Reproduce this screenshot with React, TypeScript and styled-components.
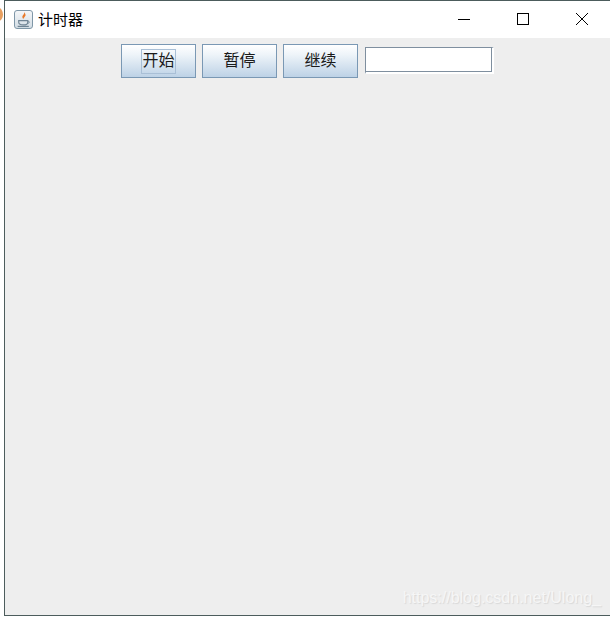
import styled, { createGlobalStyle } from "styled-components";

const GlobalStyle = createGlobalStyle`
  html,
  body {
    margin: 0;
    padding: 0;
    background: #ffffff;
  }
`;

export default function App() {
  return (
    <Screen>
      <GlobalStyle />
      <Desktop>
        <DesktopBlob />
      </Desktop>
      <Window>
        <TitleBar>
          <AppIcon>
            <svg width="15" height="17" viewBox="0 0 14 16">
              <path d="M7.500 1c1 2-2 3-1.500 5 .2.8.6 1.200 1 1.600C6.800 6 9.600 5 8.800 3 9 4 8.600 2 7.500 1z" fill="#e8792a" />
              <path d="M2.500 9h8.500v1.500c0 1.800-1.600 2.600-4.200 2.600S2.500 12.300 2.500 10.500z" fill="none" stroke="#6f8494" strokeWidth="1.100" />
              <path d="M11 9.500c2 0 2 2-.5 2.400" fill="none" stroke="#6f8494" strokeWidth="0.900" />
              <path d="M1.500 14.500h10.500" stroke="#6f8494" strokeWidth="1.200" />
            </svg>
          </AppIcon>
          <Title>计时器</Title>
          <WindowControls>
            <ControlSlot>
              <svg width="12" height="12" viewBox="0 0 12 12">
                <path d="M0 6.500h12" stroke="#000" strokeWidth="1" />
              </svg>
            </ControlSlot>
            <ControlSlot>
              <svg width="12" height="12" viewBox="0 0 12 12">
                <rect x="0.500" y="0.500" width="11" height="11" fill="none" stroke="#000" strokeWidth="1" />
              </svg>
            </ControlSlot>
            <ControlSlot>
              <svg width="12" height="12" viewBox="0 0 12 12">
                <path d="M0 0l12 12M12 0L0 12" stroke="#000" strokeWidth="1" />
              </svg>
            </ControlSlot>
          </WindowControls>
        </TitleBar>
        <Content>
          <Toolbar>
            <Button type="button">
              <ButtonLabel $focused>开始</ButtonLabel>
            </Button>
            <Button type="button">
              <ButtonLabel>暂停</ButtonLabel>
            </Button>
            <Button type="button">
              <ButtonLabel>继续</ButtonLabel>
            </Button>
            <TimeField type="text" readOnly />
          </Toolbar>
          <Watermark>https://blog.csdn.net/Ulong_</Watermark>
        </Content>
      </Window>
    </Screen>
  );
}

const Screen = styled.div`
  width: 610px;
  height: 617px;
  display: flex;
  overflow: hidden;
  background: #ffffff;
`;

const Desktop = styled.div`
  position: relative;
  width: 4px;
  flex: none;
  overflow: hidden;
`;

const DesktopBlob = styled.div`
  position: absolute;
  left: -6px;
  top: 8px;
  width: 9px;
  height: 13px;
  border-radius: 50%;
  background: #e8a060;
`;

const Window = styled.div`
  flex: 1;
  height: 616px;
  box-sizing: border-box;
  border-left: 1px solid #4c5c5c;
  border-top: 1px solid #4c5c5c;
  border-bottom: 1px solid #4c5c5c;
  display: flex;
  flex-direction: column;
`;

const TitleBar = styled.div`
  height: 37px;
  flex: none;
  box-sizing: border-box;
  display: flex;
  align-items: center;
  padding: 0 0 1px 9px;
  background: #ffffff;
`;

const AppIcon = styled.div`
  width: 19px;
  height: 19px;
  box-sizing: border-box;
  border: 1px solid #7f97a8;
  border-radius: 3px;
  background: linear-gradient(#f4f6f8, #d3dde5);
  display: flex;
  align-items: center;
  justify-content: center;
`;

const Title = styled.span`
  margin-left: 5px;
  font-family: "Noto Sans CJK SC", sans-serif;
  font-size: 15px;
  line-height: 20px;
  color: #000000;
`;

const WindowControls = styled.div`
  margin-left: auto;
  display: flex;
  margin-right: -1px;
`;

const ControlSlot = styled.div`
  width: 59px;
  height: 36px;
  display: flex;
  align-items: center;
  justify-content: center;
`;

const Content = styled.div`
  position: relative;
  flex: 1;
  background: #eeeeee;
`;

const Toolbar = styled.div`
  display: flex;
  justify-content: center;
  align-items: flex-start;
  padding-top: 6px;
  gap: 6px;
`;

const Button = styled.button`
  width: 75px;
  height: 34px;
  padding: 0;
  box-sizing: border-box;
  border: 1px solid #7a98b4;
  background: linear-gradient(#ffffff 0%, #eef4f9 30%, #bdd2e6 100%);
  display: flex;
  align-items: center;
  justify-content: center;
`;

const ButtonLabel = styled.span<{ $focused?: boolean }>`
  box-sizing: border-box;
  width: 35px;
  height: 25px;
  padding-bottom: 4px;
  display: flex;
  align-items: center;
  justify-content: center;
  white-space: nowrap;
  font-family: "Noto Sans CJK SC", sans-serif;
  font-size: 16px;
  line-height: 20px;
  color: #1a1a1a;
  border: 1px solid ${(p) => (p.$focused ? "#a9bfd6" : "transparent")};
`;

const TimeField = styled.input`
  width: 129px;
  height: 27px;
  margin: 3px 0 0 1px;
  padding: 0;
  box-sizing: border-box;
  background: #ffffff;
  border-style: solid;
  border-width: 1px 2px 2px 1px;
  border-color: #7f8f9f #ffffff #ffffff #7f8f9f;
  box-shadow: inset -1px -1px 0 #7f8f9f;
  outline: none;
`;

const Watermark = styled.div`
  position: absolute;
  right: 9px;
  bottom: 8px;
  font-family: "Liberation Sans", sans-serif;
  font-size: 16px;
  color: #f6f6f6;
  text-shadow: 1px 1px 1px #d8d8d8;
`;
